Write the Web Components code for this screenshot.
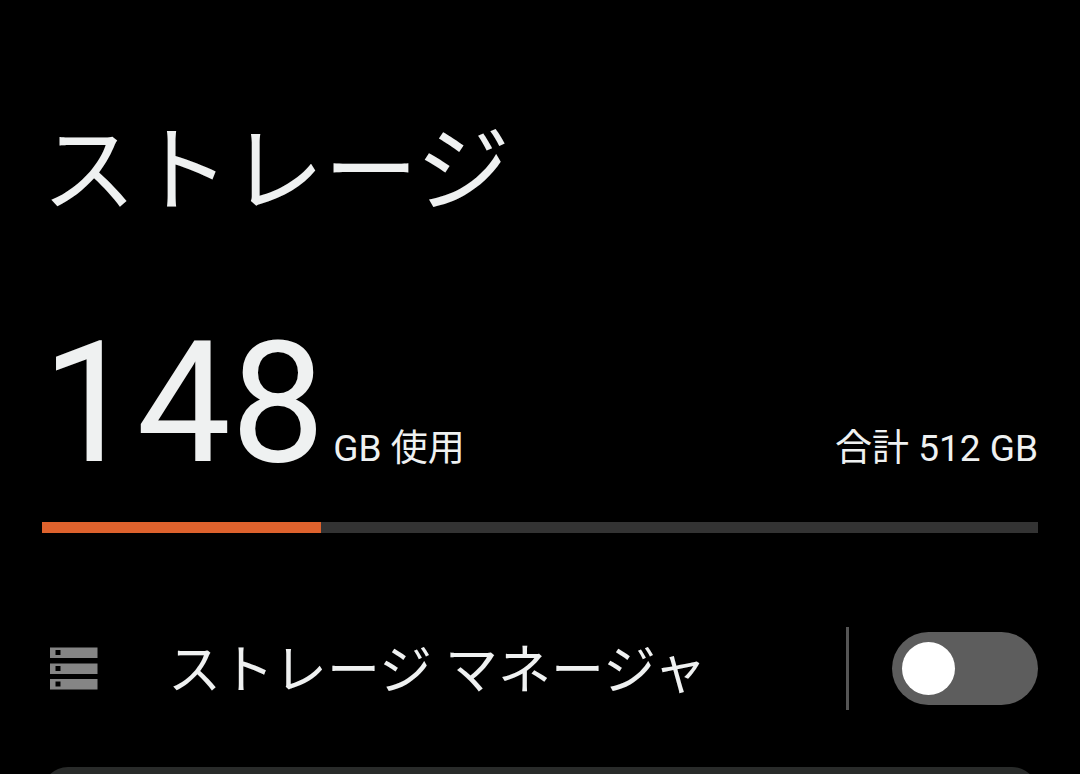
<!DOCTYPE html>
<html lang="ja">
<head>
<meta charset="utf-8">
<meta name="viewport" content="width=device-width, initial-scale=1">
<title>ストレージ</title>
<style>
  body { margin: 0; background: #000; color: #eff1f1; font-family: Roboto, "Noto Sans CJK JP", sans-serif; }
</style>
</head>
<body>
<storage-page>
  <span slot="title">ストレージ</span>
  <storage-usage used="148" total="512"></storage-usage>
  <storage-switch-row>ストレージ マネージャ</storage-switch-row>
  <storage-card></storage-card>
</storage-page>
<script>
customElements.define('storage-page', class extends HTMLElement {
  constructor() {
    super();
    this.attachShadow({ mode: 'open' }).innerHTML = `
      <style>
        :host { display: block; }
        main { display: flex; flex-direction: column; box-sizing: border-box; min-height: 100vh; padding: 116px 42px 0; }
        h1 { margin: 0 0 76px; font-size: 94px; line-height: 112px; font-weight: 400; }
      </style>
      <main><h1><slot name="title"></slot></h1><slot></slot></main>`;
  }
});

customElements.define('storage-usage', class extends HTMLElement {
  constructor() {
    super();
    const used = Number(this.getAttribute('used'));
    const total = Number(this.getAttribute('total'));
    this.attachShadow({ mode: 'open' }).innerHTML = `
      <style>
        :host { display: block; margin-bottom: 94px; }
        .summary { display: flex; justify-content: space-between; align-items: baseline; margin-bottom: 18px; }
        .text { font-size: 37px; line-height: 48px; white-space: nowrap; }
        .used { display: flex; align-items: baseline; gap: 8px; }
        .number { font-size: 168px; line-height: 200px; }
        .bar { height: 11px; background: #333; }
        .fill { height: 100%; background: #de622d; }
      </style>
      <div class="summary">
        <div class="used"><span class="number">${used}</span><span class="text">GB 使用</span></div>
        <span class="text">合計 ${total} GB</span>
      </div>
      <div class="bar" role="progressbar" aria-label="使用量" aria-valuemin="0" aria-valuemax="${total}" aria-valuenow="${used}">
        <div class="fill"></div>
      </div>`;
    // The used share is shown in whole percent, rounded down.
    this.shadowRoot.querySelector('.fill').style.width = Math.floor(used / total * 100) + '%';
  }
});

customElements.define('storage-icon', class extends HTMLElement {
  constructor() {
    super();
    this.attachShadow({ mode: 'open' }).innerHTML = `
      <style>
        :host { display: block; width: 48px; height: 43px; }
        svg { display: block; }
      </style>
      <svg width="48" height="43" viewBox="0 0 48 43" aria-hidden="true">
        <path fill="#858585" fill-rule="evenodd" d="M0 .5H47.5V11H0ZM5.5 3V8H10.5V3ZM0 16.5H47.5V27H0ZM5.5 19V24H10.5V19ZM0 32H47.5V42.5H0ZM5.5 34.5V39.5H10.5V34.5Z"/>
      </svg>`;
  }
});

customElements.define('storage-switch-row', class extends HTMLElement {
  constructor() {
    super();
    this.attachShadow({ mode: 'open' }).innerHTML = `
      <style>
        :host { display: flex; align-items: center; min-height: 83px; margin-bottom: 57px; padding-left: 8px; }
        label { flex: 1; margin-left: 70px; padding-top: 4px; font-size: 53px; line-height: 72px; }
        .divider { width: 3px; height: 83px; margin-right: 43px; background: #555; }
        input { appearance: none; position: relative; flex: none; width: 146px; height: 73px; margin: 0; border-radius: 37px; background: #5d5d5d; }
        input::before { content: ""; position: absolute; left: 10px; top: 10px; width: 53px; height: 53px; border-radius: 50%; background: #fff; }
        input:checked { background: #de622d; }
        input:checked::before { left: auto; right: 10px; }
      </style>
      <storage-icon></storage-icon>
      <label for="toggle"><slot></slot></label>
      <span class="divider"></span>
      <input id="toggle" type="checkbox" role="switch">`;
  }
});

customElements.define('storage-card', class extends HTMLElement {
  constructor() {
    super();
    this.attachShadow({ mode: 'open' }).innerHTML = `
      <style>
        :host { display: flex; flex: 1 0 0; min-height: 7px; overflow: hidden; }
        /* Taller than its corners, so they keep their full radius when the host cuts it off. */
        div { flex: 1; min-height: 64px; border-radius: 26px 26px 0 0; background: #292b2a; }
      </style>
      <div><slot></slot></div>`;
  }
});
</script>
</body>
</html>
